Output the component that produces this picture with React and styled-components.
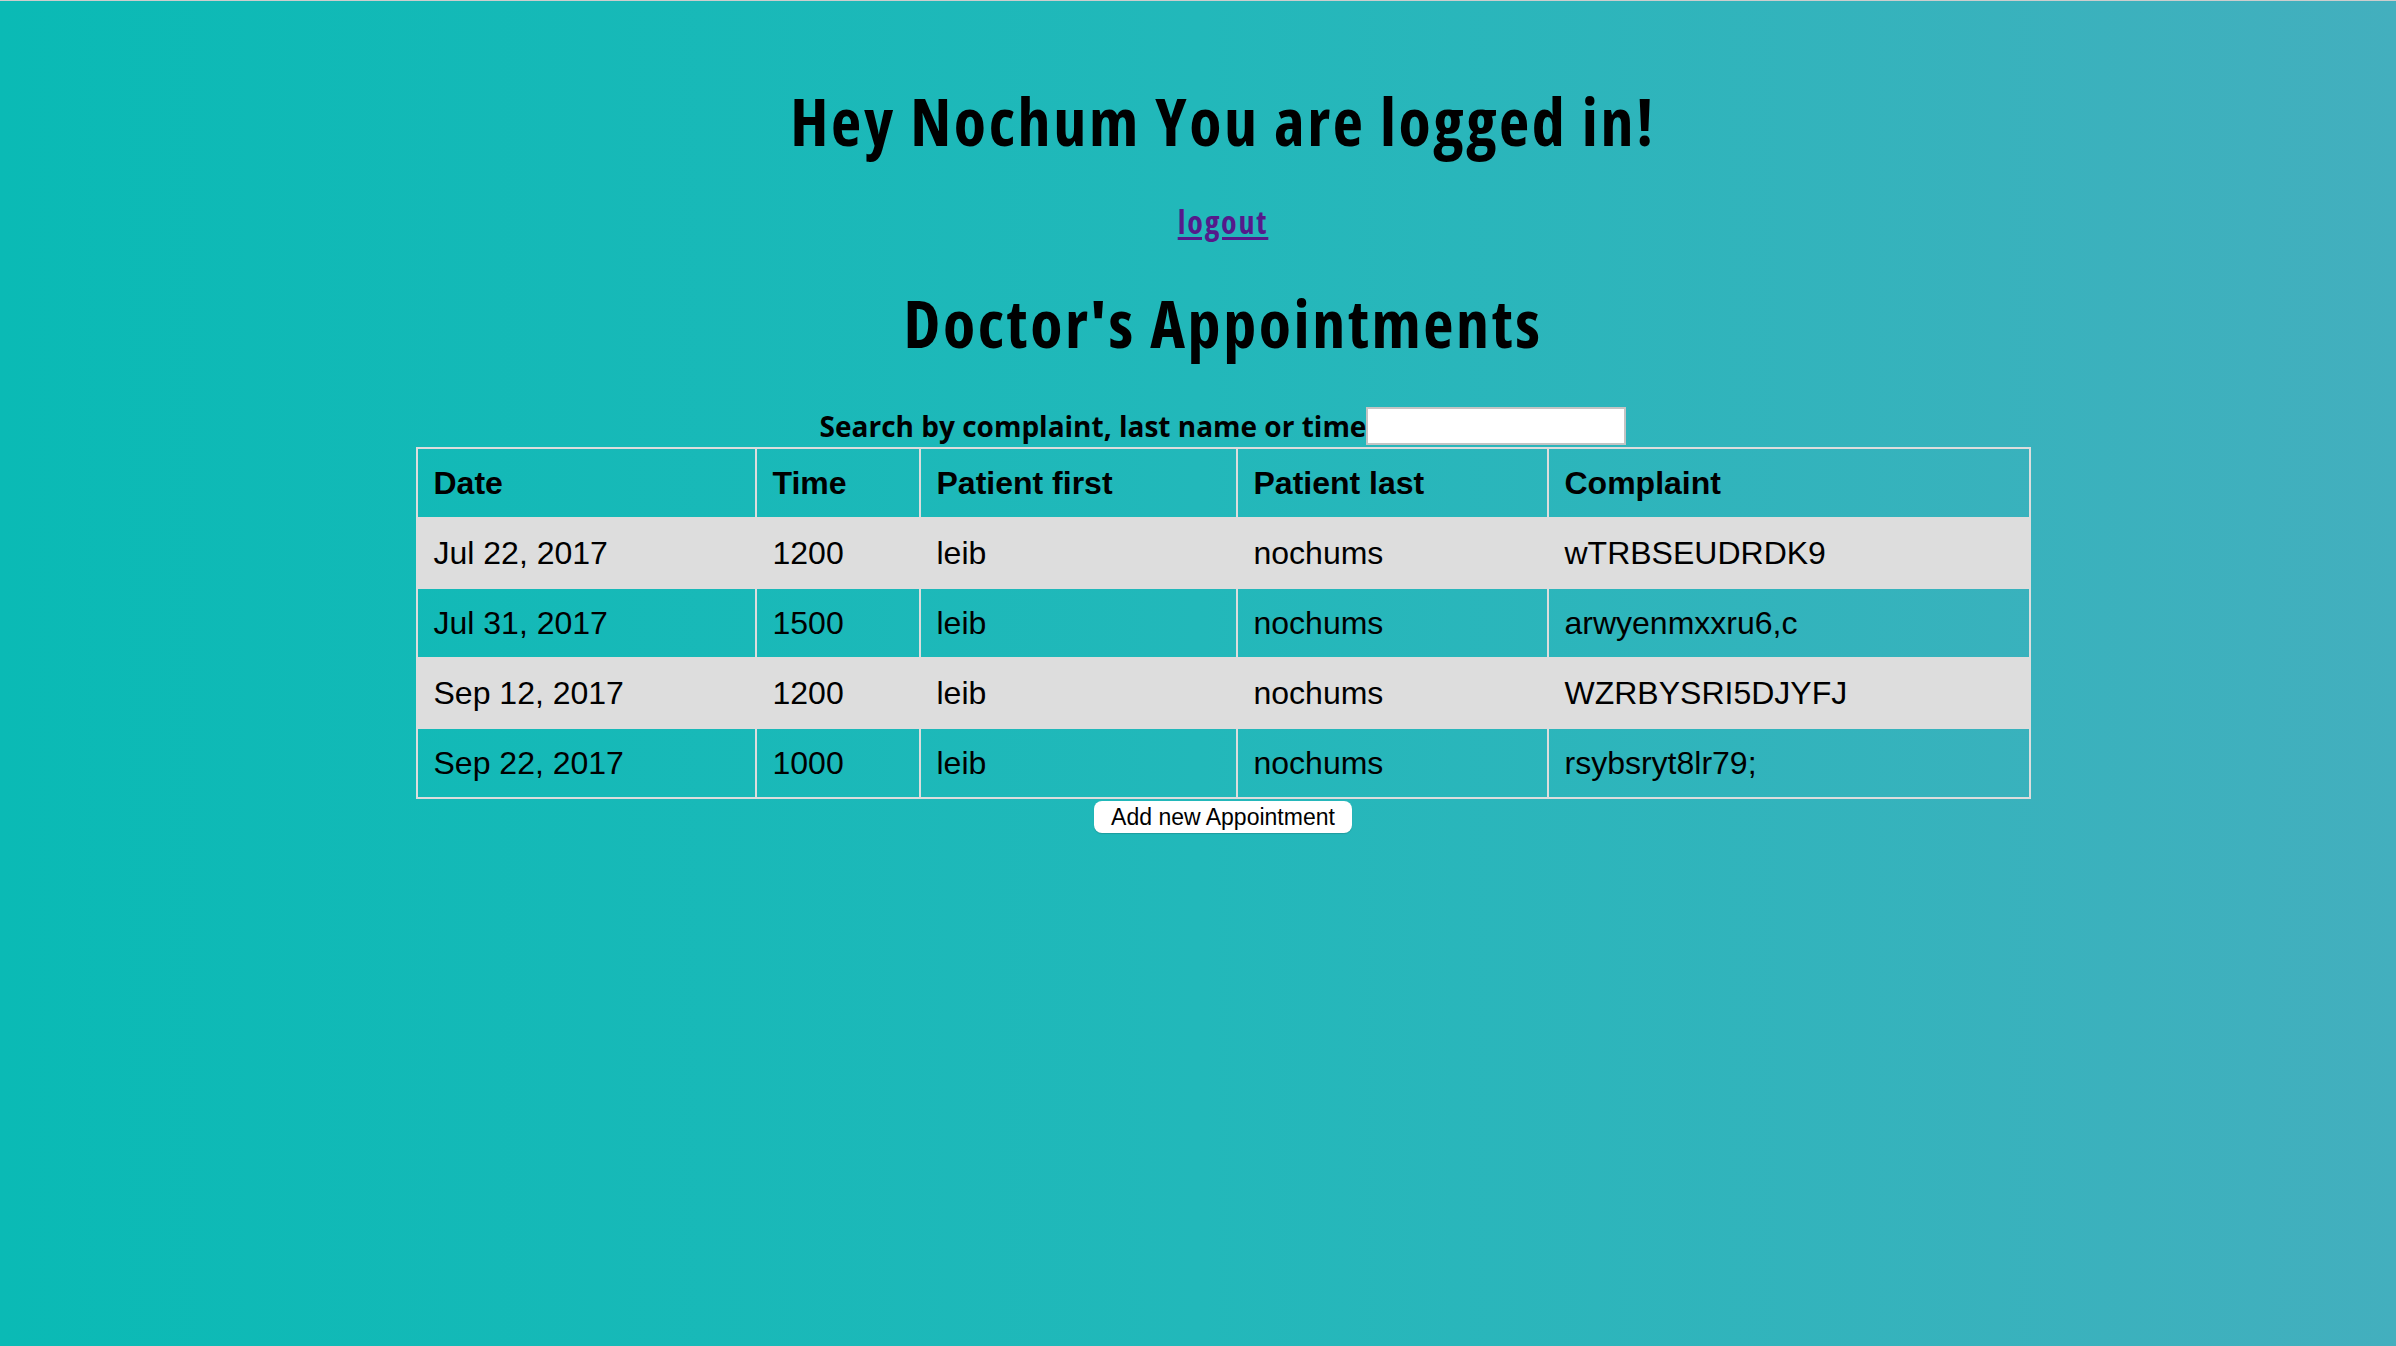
import React from 'react';
import styled, { createGlobalStyle } from 'styled-components';

const GlobalStyle = createGlobalStyle`
  html, body {
    margin: 0;
    padding: 0;
  }
  body {
    min-height: 1346px;
    border-top: 1px solid #cdcdcd;
    box-sizing: border-box;
    background: linear-gradient(to right, #0abab5 0%, #22b8ba 50%, #43afbe 100%);
    font-family: "Open Sans", sans-serif;
    color: #000;
  }
`;

const Page = styled.div`
  display: flex;
  flex-direction: column;
  align-items: center;
  padding-left: 50px;
`;

const Title = styled.h1`
  margin: 73.5px 0 0;
  font-size: 66px;
  font-weight: 700;
  font-stretch: 75%;
  letter-spacing: 2.6px;
  line-height: normal;
`;

const Logout = styled.a`
  margin-top: 35.5px;
  font-size: 32px;
  font-weight: 700;
  font-stretch: 75%;
  letter-spacing: 1.8px;
  line-height: normal;
  color: #551a8b;
  text-decoration: underline;
  text-decoration-thickness: 3px;
  text-underline-offset: 3px;
`;

const Subtitle = styled(Title).attrs({ as: 'h2' })`
  margin-top: 34px;
`;

const Search = styled.div`
  display: flex;
  align-items: flex-end;
  margin-top: 40.2px;
`;

const SearchLabel = styled.label`
  font-size: 28px;
  font-weight: 700;
  line-height: normal;
`;

const SearchInput = styled.input`
  box-sizing: border-box;
  width: 260px;
  height: 38px;
  margin: 0;
  padding: 2px 6px;
  border: 2px solid #c4c4c4;
  background: #fff;
  font-size: 26px;
  outline: none;
`;

const Table = styled.table`
  margin-top: 2px;
  width: 1613px;
  border-collapse: collapse;
  font-family: "Liberation Sans", Arial, sans-serif;
  font-size: 32px;
  table-layout: fixed;
`;

const Cell = styled.td`
  border: 2px solid #ddd;
  padding: 15.5px 16px;
  text-align: left;
  line-height: normal;
  font-weight: ${p => (p.$head ? 700 : 400)};
`;

const Row = styled.tr`
  background: ${p => (p.$shade ? '#dddddd' : 'transparent')};
`;

const AddButton = styled.button`
  margin-top: 2px;
  width: 258px;
  height: 32px;
  padding: 0;
  border: none;
  border-radius: 8px;
  background: #fff;
  color: #000;
  font-family: "Liberation Sans", Arial, sans-serif;
  font-size: 23px;
  box-shadow: 0 1px 1px rgba(0, 0, 0, 0.15);
  cursor: pointer;
`;

const columns = [
  { label: 'Date', width: 339 },
  { label: 'Time', width: 164 },
  { label: 'Patient first', width: 317 },
  { label: 'Patient last', width: 311 },
  { label: 'Complaint', width: 482 },
];

const appointments = [
  ['Jul 22, 2017', '1200', 'leib', 'nochums', 'wTRBSEUDRDK9'],
  ['Jul 31, 2017', '1500', 'leib', 'nochums', 'arwyenmxxru6,c'],
  ['Sep 12, 2017', '1200', 'leib', 'nochums', 'WZRBYSRI5DJYFJ'],
  ['Sep 22, 2017', '1000', 'leib', 'nochums', 'rsybsryt8lr79;'],
];

export default function App() {
  return (
    <Page>
      <GlobalStyle />
      <Title>Hey Nochum You are logged in!</Title>
      <Logout href="#logout">logout</Logout>
      <Subtitle>Doctor's Appointments</Subtitle>
      <Search>
        <SearchLabel htmlFor="search">Search by complaint, last name or time</SearchLabel>
        <SearchInput id="search" type="text" />
      </Search>
      <Table>
        <colgroup>
          {columns.map(c => (
            <col key={c.label} style={{ width: c.width }} />
          ))}
        </colgroup>
        <thead>
          <Row>
            {columns.map(c => (
              <Cell as="th" key={c.label} $head>
                {c.label}
              </Cell>
            ))}
          </Row>
        </thead>
        <tbody>
          {appointments.map((a, i) => (
            <Row key={i} $shade={i % 2 === 0}>
              {a.map((v, j) => (
                <Cell key={j}>{v}</Cell>
              ))}
            </Row>
          ))}
        </tbody>
      </Table>
      <AddButton type="button">Add new Appointment</AddButton>
    </Page>
  );
}
